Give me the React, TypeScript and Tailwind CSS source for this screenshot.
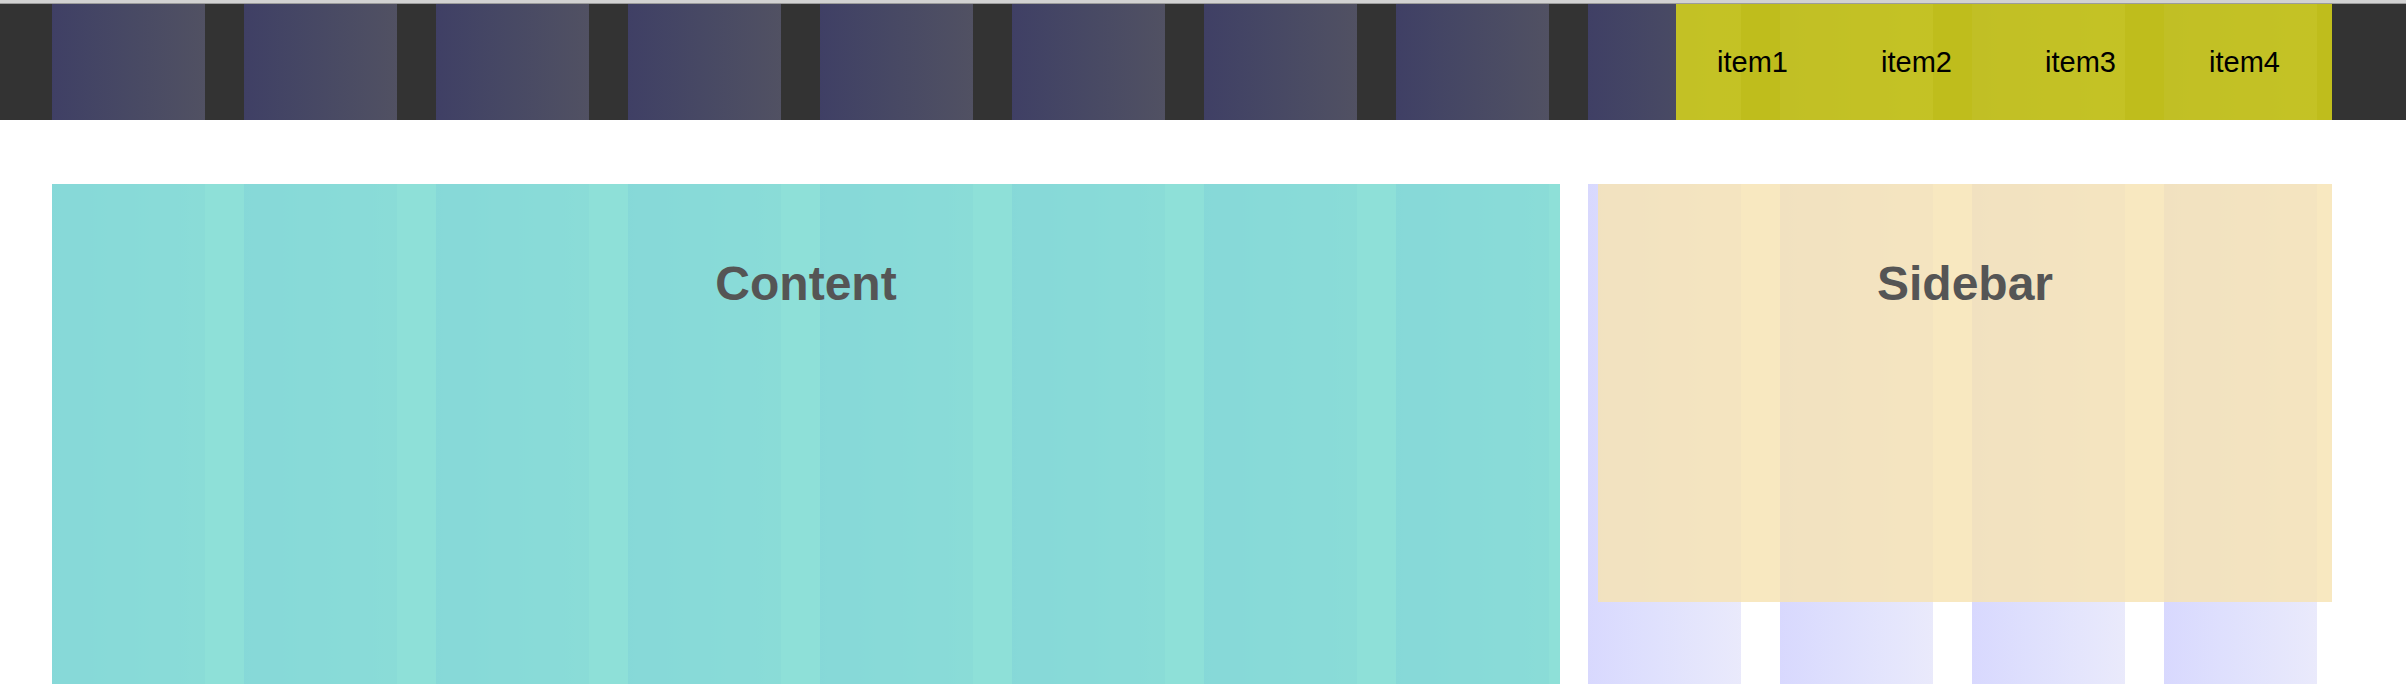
const columns = Array.from({ length: 12 }, (_, i) => i);
const navItems = ["item1", "item2", "item3", "item4"];

// the 12-column debug overlay; drawn per band so the white gap between header and main stays clean
function GridOverlay({ inset }: { inset?: boolean }) {
    return (
        <div className={`pointer-events-none absolute inset-0 z-10 flex gap-[39px] ${inset ? "pl-[52px]" : "pl-0"}`}>
            {columns.map(c => (
                <div
                    key={c}
                    className="h-full w-[153px] shrink-0 bg-gradient-to-r from-[rgba(100,100,250,0.25)] to-[rgba(170,170,240,0.25)]"
                />
            ))}
        </div>
    );
}

export default function App() {
    return (
        <div className="h-screen overflow-hidden bg-white font-['Liberation_Sans',Arial,sans-serif]">
            <div className="h-[3px] bg-[#d2d2d2]" />
            <div className="h-px bg-[#9c9c9c]" />

            <header className="relative h-[116px] bg-[#333333]">
                <GridOverlay inset />
                <div className="ml-[52px] flex h-full w-[2280px] justify-end">
                    <nav className="relative z-20 flex h-full w-[656px] items-center bg-[rgba(222,220,23,0.82)]">
                        {navItems.map(item => (
                            <a key={item} className="w-[164px] pl-[41px] text-[29px] leading-none text-black">
                                {item}
                            </a>
                        ))}
                    </nav>
                </div>
            </header>

            <main className="relative ml-[52px] mt-[64px] flex h-[500px] w-[2280px] items-start gap-[38px]">
                <GridOverlay />
                <section className="relative z-20 h-[500px] w-[1508px] bg-[rgba(114,216,206,0.8)] pt-[76px] text-center">
                    <h2 className="text-[48px] font-bold leading-none text-[#555555]">Content</h2>
                </section>
                <aside className="relative z-20 h-[418px] w-[734px] bg-[rgba(246,227,178,0.82)] pt-[76px] text-center">
                    <h2 className="text-[48px] font-bold leading-none text-[#555555]">Sidebar</h2>
                </aside>
            </main>
        </div>
    );
}
